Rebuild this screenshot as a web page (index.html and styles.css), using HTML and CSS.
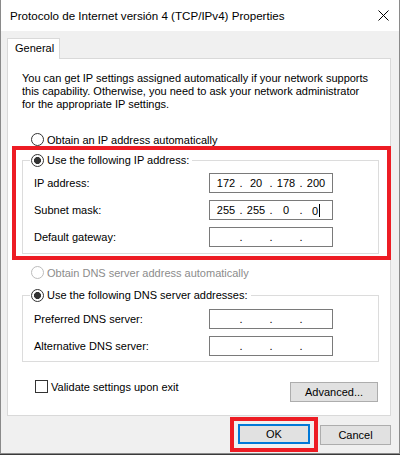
FILE: index.html
```html
<!DOCTYPE html>
<html lang="es">
<head>
    <meta charset="UTF-8">
    <title>Protocolo de Internet versión 4 (TCP/IPv4) Properties</title>
    <link rel="stylesheet" href="styles.css">
</head>
<body>
    <div class="window">
        <div class="titlebar">
            <span class="title">Protocolo de Internet versión 4 (TCP/IPv4) Properties</span>
            <svg class="close" width="11" height="11" viewBox="0 0 11 11">
                <path d="M0.5 0.5 L10.5 10.5 M10.5 0.5 L0.5 10.5" stroke="#000" stroke-width="1" fill="none"/>
            </svg>
        </div>

        <div class="dialog">
            <div class="tabs">
                <div class="tab">General</div>
            </div>

            <div class="panel">
                <p class="intro">You can get IP settings assigned automatically if your network supports<br>this capability. Otherwise, you need to ask your network administrator<br>for the appropriate IP settings.</p>

                <div class="option first">
                    <span class="radio"></span>
                    <span>Obtain an IP address automatically</span>
                </div>

                <div class="highlight">
                    <fieldset class="group ip-group">
                        <legend>
                            <span class="radio checked"></span>
                            <span>Use the following IP address:</span>
                        </legend>
                        <div class="fields">
                            <div class="field">
                                <span>IP address:</span>
                                <div class="ipbox">
                                    <span class="seg">172</span><span class="dot">.</span><span class="seg">20</span><span class="dot">.</span><span class="seg">178</span><span class="dot">.</span><span class="seg">200</span>
                                </div>
                            </div>
                            <div class="field">
                                <span>Subnet mask:</span>
                                <div class="ipbox">
                                    <span class="seg">255</span><span class="dot">.</span><span class="seg">255</span><span class="dot">.</span><span class="seg">0</span><span class="dot">.</span><span class="seg">0<span class="caret"></span></span>
                                </div>
                            </div>
                            <div class="field">
                                <span>Default gateway:</span>
                                <div class="ipbox">
                                    <span class="seg"></span><span class="dot">.</span><span class="seg"></span><span class="dot">.</span><span class="seg"></span><span class="dot">.</span><span class="seg"></span>
                                </div>
                            </div>
                        </div>
                    </fieldset>
                </div>

                <div class="option disabled">
                    <span class="radio"></span>
                    <span>Obtain DNS server address automatically</span>
                </div>

                <fieldset class="group dns-group">
                    <legend>
                        <span class="radio checked"></span>
                        <span>Use the following DNS server addresses:</span>
                    </legend>
                    <div class="fields">
                        <div class="field">
                            <span>Preferred DNS server:</span>
                            <div class="ipbox">
                                <span class="seg"></span><span class="dot">.</span><span class="seg"></span><span class="dot">.</span><span class="seg"></span><span class="dot">.</span><span class="seg"></span>
                            </div>
                        </div>
                        <div class="field">
                            <span>Alternative DNS server:</span>
                            <div class="ipbox">
                                <span class="seg"></span><span class="dot">.</span><span class="seg"></span><span class="dot">.</span><span class="seg"></span><span class="dot">.</span><span class="seg"></span>
                            </div>
                        </div>
                    </div>
                </fieldset>

                <div class="panel-footer">
                    <div class="check-row">
                        <span class="checkbox"></span>
                        <span>Validate settings upon exit</span>
                    </div>
                    <button class="btn advanced">Advanced...</button>
                </div>
            </div>

            <div class="buttons">
                <div class="ok-highlight">
                    <button class="btn ok">OK</button>
                </div>
                <button class="btn cancel">Cancel</button>
            </div>
        </div>
    </div>
</body>
</html>
```

FILE: styles.css
```css
body {
    margin: 0;
    font-family: "Liberation Sans", Arial, sans-serif;
    font-size: 11px;
    color: #000000;
    background: #3a3a3a;
}

.window {
    width: 400px;
    height: 454px;
    box-sizing: border-box;
    border: 1px solid #8a8a8a;
    border-top: none;
    background: #f0f0f0;
    display: flex;
    flex-direction: column;
}

.titlebar {
    height: 31px;
    flex-shrink: 0;
    background: #ffffff;
    display: flex;
    align-items: center;
    justify-content: space-between;
    padding: 0 10px 0 9px;
}

.title {
    font-size: 11.6px;
}

.dialog {
    flex: 1;
    padding: 7px 8px 0 6px;
    display: flex;
    flex-direction: column;
}

.tabs {
    display: flex;
}

.tab {
    position: relative;
    z-index: 1;
    width: 53px;
    height: 21px;
    box-sizing: border-box;
    background: #ffffff;
    border: 1px solid #d9d9d9;
    border-bottom: none;
    margin-bottom: -1px;
    padding-left: 7px;
    line-height: 19px;
}

.panel {
    height: 358px;
    box-sizing: border-box;
    background: #ffffff;
    border: 1px solid #d9d9d9;
    padding-top: 13px;
}

.intro {
    margin: 0 0 0 14px;
    line-height: 13px;
    white-space: nowrap;
}

.option {
    display: flex;
    align-items: center;
    gap: 3px;
    height: 13px;
    margin-left: 23px;
}

.option.first {
    margin-top: 22px;
}

.option.disabled {
    margin-top: 6px;
    color: #8c8c8c;
}

.radio {
    width: 13px;
    height: 13px;
    box-sizing: border-box;
    border: 1px solid #333333;
    border-radius: 50%;
    background: #ffffff;
    flex-shrink: 0;
}

.radio.checked {
    background: radial-gradient(circle, #333333 0, #333333 3.2px, #ffffff 3.8px);
}

.option.disabled .radio {
    border-color: #bcbcbc;
}

.highlight {
    border: 4px solid #ed1c24;
    margin: 0 -1px 0 4px;
}

.group {
    border: 1px solid #dcdcdc;
    padding: 0;
    min-inline-size: 0;
}

.group legend {
    display: flex;
    align-items: center;
    gap: 3px;
    height: 14px;
    margin-left: 7px;
    padding: 0 3px 0 1px;
}

.ip-group {
    margin: 3px 8px 2px 6px;
}

.ip-group .fields {
    padding: 6px 0 6px 0;
}

.dns-group {
    margin: 9px 11px 0 14px;
}

.dns-group .fields {
    padding: 7px 0 5px 0;
}

.fields {
    display: flex;
    flex-direction: column;
    gap: 7px;
}

.field {
    height: 20px;
    display: flex;
    align-items: center;
    justify-content: space-between;
    padding: 0 45px 0 11px;
}

.ipbox {
    width: 124px;
    height: 20px;
    box-sizing: border-box;
    border: 1px solid #7a7a7a;
    background: #ffffff;
    display: flex;
    align-items: center;
    padding-left: 2px;
}

.seg {
    width: 28px;
    text-align: center;
}

.dot {
    width: 2px;
    display: flex;
    justify-content: center;
}

.caret {
    display: inline-block;
    width: 1px;
    height: 13px;
    background: #000000;
    margin-left: 1px;
    vertical-align: -2px;
}

.panel-footer {
    display: flex;
    justify-content: space-between;
    align-items: flex-start;
    margin: 18px 12px 0 27px;
}

.check-row {
    display: flex;
    align-items: center;
    gap: 3px;
    height: 13px;
}

.checkbox {
    width: 13px;
    height: 13px;
    box-sizing: border-box;
    border: 1px solid #333333;
    background: #ffffff;
}

.btn {
    font-family: inherit;
    font-size: 11px;
    color: #000000;
    background: #e1e1e1;
    border: 1px solid #adadad;
    height: 20px;
    padding: 0;
    box-sizing: border-box;
}

.advanced {
    width: 88px;
    margin-top: 2px;
}

.buttons {
    display: flex;
    justify-content: flex-end;
    align-items: center;
    gap: 2px;
    margin-top: 1px;
}

.ok-highlight {
    border: 4px solid #ed1c24;
    padding: 3px 4px 4px 4px;
    display: flex;
}

.ok {
    width: 72px;
    border: 2px solid #0078d7;
}

.cancel {
    width: 71px;
}
```
